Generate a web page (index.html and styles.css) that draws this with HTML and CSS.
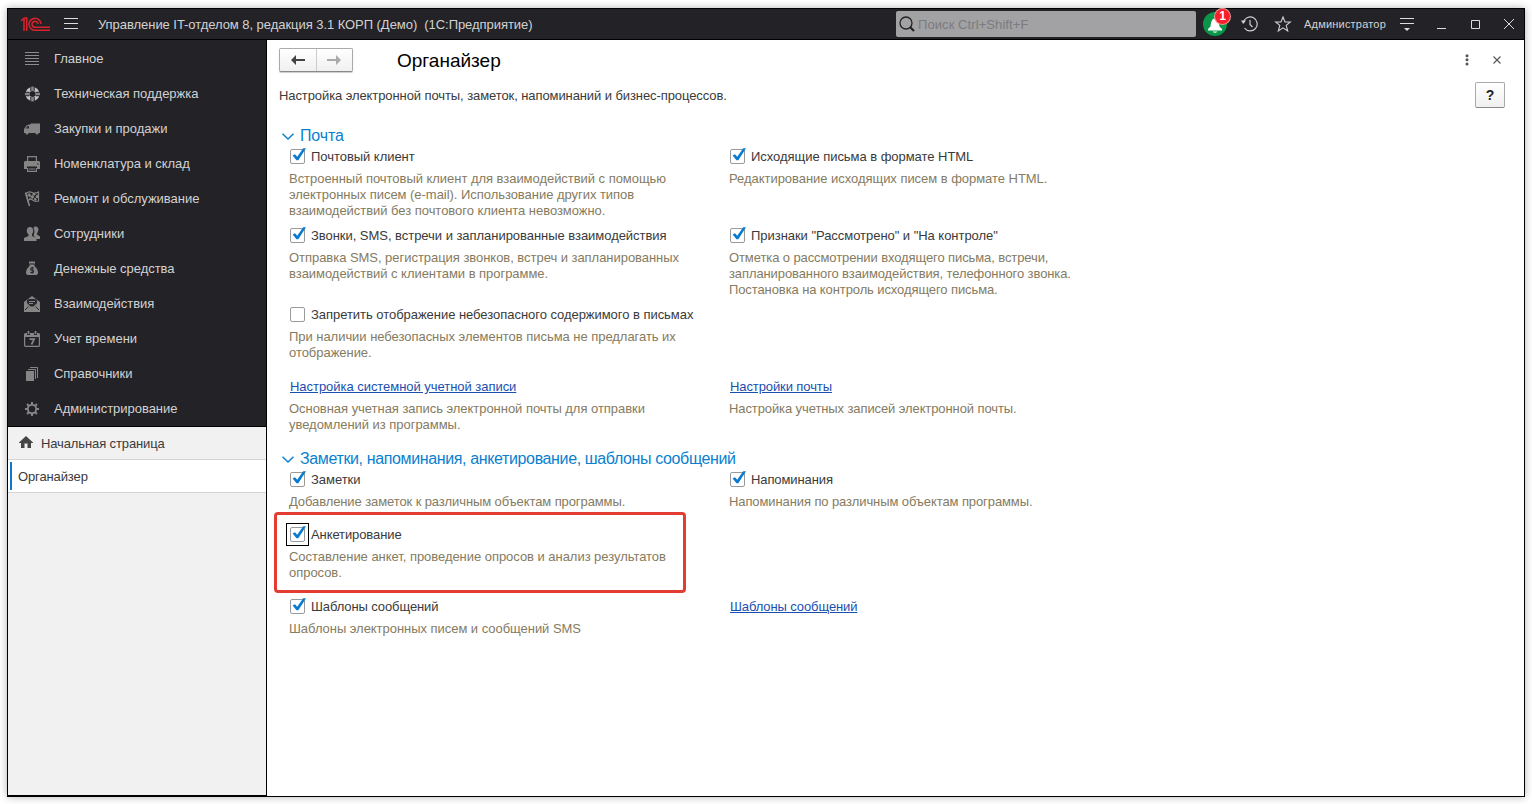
FILE: index.html
```
<!DOCTYPE html>
<html lang="ru">
<head>
<meta charset="utf-8">
<title>Органайзер</title>
<link rel="stylesheet" href="styles.css">
</head>
<body>
<svg width="0" height="0" class="defs">
  <symbol id="check" viewBox="0 0 17 17"><rect x=".5" y="2.5" width="14" height="14" rx="1.5" fill="#fff" stroke="#9a9a9a"/><path d="M2.600 8.400L5 7.300L7.200 9.700L13.200 1.300H16L8.300 13.200H6.500Z" fill="#0a7ad1"/></symbol>
  <symbol id="blank" viewBox="0 0 17 17"><rect x=".5" y="2.500" width="14" height="14" rx="1.500" fill="#fff" stroke="#9a9a9a"/></symbol>
  <symbol id="chev" viewBox="0 0 12 7"><path d="M.5.7L6 6L11.500.7" fill="none" stroke="#0a7fcf" stroke-width="1.400"/></symbol>
</svg>
<div class="window">
  <header class="titlebar">
    <svg class="logo" width="30" height="15" viewBox="0 0 30 15" fill="none" stroke="#d8222a" stroke-width="1.600"><path d="M0 4L2.500 1.500H3V14M3 1H5.700V14M20 7A6 6 0 1 0 14.500 13.300H29M17 7A3 3 0 1 0 14.500 10.300H29"/></svg>
    <svg class="burger" width="14" height="12" viewBox="0 0 14 12" stroke="#ddd"><path d="M0 .5H14M0 5.500H14M0 10.500H14"/></svg>
    <span class="app">Управление IT-отделом 8, редакция 3.1 КОРП (Демо)&nbsp; (1С:Предприятие)</span>
    <div class="search"><svg width="16" height="16" viewBox="0 0 16 16" fill="none" stroke="#222"><circle cx="7" cy="7" r="6" stroke-width="1.300"/><path d="M11 11L15 15" stroke-width="2.200"/></svg><span>Поиск Ctrl+Shift+F</span></div>
    <div class="bell"><svg width="24" height="24" viewBox="0 0 24 24"><circle cx="12" cy="12" r="12" fill="#0a9648"/><path d="M5 18.500V17L7.500 14.500C8 10 9 6.500 12 6.500S16 10 16.500 14.500L19 17V18.500ZM9.500 19.500H14.500Q12 22 9.500 19.500" fill="#fff"/></svg><b class="badge">1</b></div>
    <svg class="history" width="17" height="16" viewBox="0 0 17 16" fill="none" stroke="#d0d0d0" stroke-width="1.200"><path d="M2.500 6A7 7 0 1 1 3.500 12M9 4V8.500L11.500 11"/><path d="M0 4.500H5L2.200 8Z" fill="#d0d0d0" stroke="none"/></svg>
    <svg class="star" width="16" height="16" viewBox="0 0 16 16" fill="none" stroke="#d0d0d0" stroke-width="1.100"><path d="M8 1L10 6H15.300L11.200 9.400L12.700 15L8 11.800L3.300 15L4.800 9.400L.7 6H6Z"/></svg>
    <span class="user">Администратор</span>
    <svg class="panelmenu" width="14" height="14" viewBox="0 0 14 14"><path d="M0 .5H14M0 5.500H14" stroke="#ddd"/><path d="M4 10H10L7 13Z" fill="#ddd"/></svg>
    <svg class="controls" width="74" height="12" viewBox="0 0 74 12" fill="none" stroke="#ddd"><path d="M0 10.500H9M34.500 2.500H42.500V10.500H34.500ZM67 1L77 11M77 1L67 11"/></svg>
  </header>
  <div class="body">
    <aside class="sidebar">
      <nav class="menu">
        <div class="item"><svg viewBox="0 0 16 16" stroke="#8d8d8d"><path d="M1 1.500H15M1 4.500H15M1 7.500H15M1 10.500H15M1 13.500H15"/></svg><span>Главное</span></div>
        <div class="item"><svg viewBox="0 0 16 16" fill="none"><circle cx="8.500" cy="8" r="5" stroke="#c4c4c4" stroke-width="4"/><path d="M8.500 .5V5M8.500 11V15.500M1 8H5.500M11.500 8H16" stroke="#232227" stroke-width="4.400"/><path d="M8.500 .5V5M8.500 11V15.500M1 8H5.500M11.500 8H16" stroke="#858585" stroke-width="2.600"/></svg><span>Техническая поддержка</span></div>
        <div class="item"><svg viewBox="0 0 16 16" fill="#858585"><path d="M6 3.500L7 2.500H16V12H14.500A1.500 1.500 0 0 1 11.500 12H4.500A1.500 1.500 0 0 1 1.500 12H0V8L2.500 4.500L5 3.500Z"/><path d="M1.500 7.500L3.500 5H5V7.500Z" fill="#333"/></svg><span>Закупки и продажи</span></div>
        <div class="item"><svg viewBox="0 0 16 16" fill="none" stroke="#858585" stroke-width="1.200"><path d="M3.600 5V.6H12.400V5"/><path d="M0 6L1 5H15L16 6V13H13V10.500H3V13H0Z" fill="#858585" stroke="none"/><path d="M3.600 12V15.400H12.400V12M5 13H11"/><path d="M13 8H14.500" stroke="#232227"/></svg><span>Номенклатура и склад</span></div>
        <div class="item"><svg viewBox="0 0 16 16" fill="none" stroke="#858585"><path d="M1.500 1.500L5.500 15" stroke-width="1.600"/><path d="M2 2.500Q5 0 8 1.500T14.500 1V10Q11 11 8.500 9T4 10Z" stroke-width="1.200"/><path d="M3.500 4L5.500 2.500L6.500 4.500L5 5.500ZM9 2.500H11V4H9ZM12.500 4.500L14.500 4V6.500H12ZM6.500 5.500L8.500 4.500L10 6L8 7.500ZM5 8L6.500 8ZM10.500 7.500H12V9H10.500Z" fill="#858585"/></svg><span>Ремонт и обслуживание</span></div>
        <div class="item"><svg viewBox="0 0 16 16" fill="#858585"><path d="M9.500 1.500Q10.500 .3 12 .5A2.700 3.200 0 0 1 14 5.500L13 7.500V8.500L16 10.500V13H12.500L9.500 9.500L10.500 6Z"/><ellipse cx="6" cy="4.800" rx="3.200" ry="3.800"/><path d="M4.500 7H8V10L12.500 12V15H0V12L4.500 10Z"/></svg><span>Сотрудники</span></div>
        <div class="item"><svg viewBox="0 0 16 16" fill="#858585"><path d="M5 .5H11V2.500H5ZM5.500 3.500H10.500V5Q14 8 14 11V12.500Q13 14 12 14H4Q3 14 2 12.500V11Q2 8 5.500 5Z"/><path d="M10 7H6.800V9.200H9.500V11.500H6.300M8.200 5.800V12.800" fill="none" stroke="#28272b"/></svg><span>Денежные средства</span></div>
        <div class="item"><svg viewBox="0 0 16 16"><path d="M0 6L8 0L16 6V16H0Z" fill="#858585"/><path d="M3 4L5 3H11L13 4V7L9.500 10.500H6.500L3 7Z" fill="#29282d"/><path d="M5 5.500H11M5 7.500H9" stroke="#858585"/><path d="M1 14L4.500 10.500M15 14L11.500 10.500" stroke="#29282d"/></svg><span>Взаимодействия</span></div>
        <div class="item"><svg viewBox="0 0 16 16"><rect x=".6" y="2.600" width="14.800" height="12.800" rx="1" fill="none" stroke="#858585" stroke-width="1.200"/><path d="M1 3H15V6H1Z" fill="#858585"/><path d="M4.500 0V4M11.500 0V4" stroke="#28272b" stroke-width="3"/><path d="M4.500 0V3M11.500 0V3M5.500 8.200H10.200L7.500 13.500" fill="none" stroke="#858585" stroke-width="1.700"/></svg><span>Учет времени</span></div>
        <div class="item"><svg viewBox="0 0 16 16"><path d="M2 5H10V15H2Z" fill="#858585"/><path d="M4 3.500H11.500V13M6 1.500H13.500V12" fill="none" stroke="#858585"/></svg><span>Справочники</span></div>
        <div class="item"><svg viewBox="0 0 16 16" fill="none" stroke="#858585" stroke-width="2"><path d="M8 1V4M8 12V15M1 8H4M12 8H15M3 3L5 5M11 11L13 13M13 3L11 5M3 13L5 11"/><circle cx="8" cy="8" r="4.200" stroke-width="1.900"/></svg><span>Администрирование</span></div>
      </nav>
      <div class="tab home"><svg width="14" height="12" viewBox="0 0 14 12"><path d="M7 0L14 6.500V7H12V12H8.500V7.500H5.500V12H2V7H0V6.500Z" fill="#464646"/></svg><span>Начальная страница</span></div>
      <div class="tab current"><span>Органайзер</span></div>
    </aside>
    <main class="page">
      <div class="toolbar">
        <div class="nav"><span><svg width="14" height="10" viewBox="0 0 14 10"><path d="M5 0V4H14V6H5V10L0 5Z" fill="#444"/></svg></span><span><svg width="14" height="10" viewBox="0 0 14 10"><path d="M9 0V4H0V6H9V10L14 5Z" fill="#aaa"/></svg></span></div>
        <h1>Органайзер</h1>
        <svg class="more" width="4" height="12" viewBox="0 0 4 12" fill="#555"><circle cx="2" cy="1.700" r="1.500"/><circle cx="2" cy="5.800" r="1.500"/><circle cx="2" cy="10" r="1.500"/></svg>
        <svg width="8" height="8" viewBox="0 0 8 8" stroke="#555" stroke-width="1.100"><path d="M.5.5L7.500 7.500M7.500.5L.5 7.500"/></svg>
      </div>
      <div class="intro"><span>Настройка электронной почты, заметок, напоминаний и бизнес-процессов.</span><button>?</button></div>

      <h2><svg width="12" height="7"><use href="#chev"/></svg><span>Почта</span></h2>
      <div class="grid mail">
        <section><div class="opt"><svg><use href="#check"/></svg><span>Почтовый клиент</span></div><p>Встроенный почтовый клиент для взаимодействий с помощью<br>электронных писем (e-mail). Использование других типов<br>взаимодействий без почтового клиента невозможно.</p></section>
        <section><div class="opt"><svg><use href="#check"/></svg><span>Исходящие письма в формате HTML</span></div><p>Редактирование исходящих писем в формате HTML.</p></section>
        <section><div class="opt"><svg><use href="#check"/></svg><span>Звонки, SMS, встречи и запланированные взаимодействия</span></div><p>Отправка SMS, регистрация звонков, встреч и запланированных<br>взаимодействий с клиентами в программе.</p></section>
        <section><div class="opt"><svg><use href="#check"/></svg><span>Признаки "Рассмотрено" и "На контроле"</span></div><p class="tight">Отметка о рассмотрении входящего письма, встречи,<br>запланированного взаимодействия, телефонного звонка.<br>Постановка на контроль исходящего письма.</p></section>
        <section class="wide"><div class="opt"><svg><use href="#blank"/></svg><span>Запретить отображение небезопасного содержимого в письмах</span></div><p>При наличии небезопасных элементов письма не предлагать их<br>отображение.</p></section>
        <section><div class="opt"><a>Настройка системной учетной записи</a></div><p>Основная учетная запись электронной почты для отправки<br>уведомлений из программы.</p></section>
        <section><div class="opt tight"><a>Настройки почты</a></div><p class="tight">Настройка учетных записей электронной почты.</p></section>
      </div>
      <h2 class="second"><svg width="12" height="7"><use href="#chev"/></svg><span>Заметки, напоминания, анкетирование, шаблоны сообщений</span></h2>
      <div class="grid notes">
        <section><div class="opt"><svg><use href="#check"/></svg><span>Заметки</span></div><p class="tight">Добавление заметок к различным объектам программы.</p></section>
        <section><div class="opt tight"><svg><use href="#check"/></svg><span>Напоминания</span></div><p class="tight">Напоминания по различным объектам программы.</p></section>
        <section class="wide marked"><div class="opt focus tight"><svg><use href="#check"/></svg><span>Анкетирование</span></div><p>Составление анкет, проведение опросов и анализ результатов<br>опросов.</p></section>
        <section><div class="opt tight"><svg><use href="#check"/></svg><span>Шаблоны сообщений</span></div><p>Шаблоны электронных писем и сообщений SMS</p></section>
        <section><div class="opt tight"><a>Шаблоны сообщений</a></div></section>
      </div>
    </main>
  </div>
</div>
</body>
</html>
```
FILE: styles.css
```
*, *::before { box-sizing: border-box; }
body { margin: 0; height: 804px; padding: 8px 7px 7px; overflow: hidden; background: #fff; font: 13px/16px "Liberation Sans", Arial, sans-serif; color: #3a3a3a; }
svg { display: block; flex: none; overflow: visible; }
.defs { position: absolute; }
.window { width: 1518px; height: 789px; border: 1px solid #000; background: #fff; box-shadow: 0 0 8px rgba(0,0,0,.3); display: flex; flex-direction: column; }
.titlebar { height: 31px; flex: none; background: #232227; border-bottom: 1px solid #000; display: flex; align-items: center; color: #d2d2d2; white-space: nowrap; }
.logo { margin-left: 13px; }
.burger { margin-left: 13px; }
.app { margin-left: 20px; width: 798px; padding-top: 2px; letter-spacing: -.05px; }
.search { width: 300px; height: 26px; background: #a2a2a4; border-radius: 2px; display: flex; align-items: center; gap: 3px; padding-left: 3px; color: #7b7b7d; letter-spacing: .08px; }
.search span { padding-top: 1px; }
.bell { position: relative; margin-left: 7px; }
.badge { position: absolute; left: 12px; top: -3px; width: 15px; height: 15px; border-radius: 50%; background: #fb1f2b; box-shadow: 0 0 0 1px #e99; color: #fff; font-size: 12px; line-height: 15px; text-align: center; }
.history { margin-left: 14px; }
.star { margin-left: 17px; }
.user { margin-left: 13px; width: 83px; font-size: 11px; letter-spacing: .2px; }
.panelmenu { margin-left: 13px; margin-top: 2px; }
.controls { margin-left: 23px; }
.body { display: flex; flex: 1; min-height: 0; }
.sidebar { width: 259px; background: #f1f1f1; border-right: 1px solid #000; border-bottom: 1px solid #000; }
.menu { height: 387px; background: #232227; border-bottom: 1px solid #000; padding-top: 1px; }
.item { height: 35px; display: flex; align-items: center; padding-left: 16px; gap: 14px; color: #d2d2d2; letter-spacing: -.03px; }
.item svg { width: 16px; height: 16px; }
.tab { height: 33px; display: flex; align-items: center; border-bottom: 1px solid #d5d5d5; padding-left: 10px; letter-spacing: -.12px; }
.tab span { padding-top: 2px; }
.home svg { margin: -2px 8px 0 1px; }
.current { background: #fff; padding: 0; }
.current::before { content: ""; width: 2px; height: 28px; margin: 0 6px 0 2px; background: #0a7ad1; }
.page { flex: 1; }
.toolbar { display: flex; align-items: center; height: 40px; padding: 0 23px 0 12px; }
.nav { display: flex; width: 74px; height: 24px; border: 1px solid #aaa; border-bottom-color: #888; border-radius: 2px; background: linear-gradient(#fff, #f0f0f0); box-shadow: 0 1px 1px #ccc; }
.nav span { flex: 1; display: flex; align-items: center; justify-content: center; }
.nav span + span { border-left: 1px solid #ccc; }
h1 { margin: 0 auto 0 44px; padding-top: 1px; font-size: 19px; line-height: 22px; font-weight: 400; color: #000; }
.more { margin-right: 24px; }
.intro { display: flex; align-items: center; justify-content: space-between; height: 30px; padding: 0 19px 0 12px; letter-spacing: -.09px; }
.intro span { padding-top: 2px; }
.intro button { width: 30px; height: 26px; padding: 0; border: 1px solid #aaa; border-bottom-color: #888; border-radius: 2px; background: linear-gradient(#fff, #f0f0f0); font: bold 14px "Liberation Sans", sans-serif; color: #222; }
h2 { display: flex; align-items: center; gap: 6px; height: 20px; margin: 16px 0 3px 15px; font-size: 16px; line-height: 20px; font-weight: 400; color: #0a7fcf; letter-spacing: -.15px; }
.second { margin-top: 0; letter-spacing: -.37px; }
.grid { display: grid; grid-template-columns: 440px 440px; margin-left: 22px; letter-spacing: -.04px; }
.mail { grid-template-rows: 79px 79px 72px 70px; }
.notes { grid-template-rows: 55px 72px 45px; }
section { white-space: nowrap; }
.wide { grid-column: 1 / 3; }
.opt { height: 16px; margin-left: 1px; display: flex; align-items: center; gap: 4px; position: relative; }
.opt svg { width: 17px; height: 17px; margin-top: -3px; }
.opt a { color: #1a4fb0; text-decoration: underline; text-underline-offset: 1px; }
.tight { letter-spacing: -.1px; }
p { margin: 6px 0 0; color: #857b5f; }
.marked { position: relative; }
.marked::before { content: ""; position: absolute; left: -15px; top: -15px; width: 412px; height: 81px; border: 3px solid #e33d33; border-radius: 4px; }
.focus::before { content: ""; position: absolute; left: -4px; top: -4px; width: 23px; height: 23px; border: 1px solid #000; }
```
